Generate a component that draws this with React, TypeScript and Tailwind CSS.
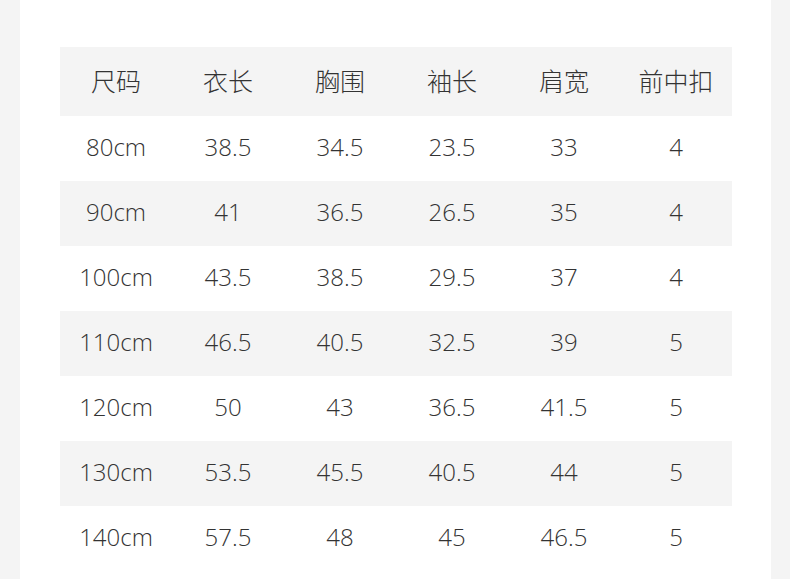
const headers = ["尺码", "衣长", "胸围", "袖长", "肩宽", "前中扣"];

const rows = [
  ["80cm", "38.5", "34.5", "23.5", "33", "4"],
  ["90cm", "41", "36.5", "26.5", "35", "4"],
  ["100cm", "43.5", "38.5", "29.5", "37", "4"],
  ["110cm", "46.5", "40.5", "32.5", "39", "5"],
  ["120cm", "50", "43", "36.5", "41.5", "5"],
  ["130cm", "53.5", "45.5", "40.5", "44", "5"],
  ["140cm", "57.5", "48", "45", "46.5", "5"],
];

export default function App() {
  return (
    <div className="flex h-[579px] w-[790px] overflow-hidden bg-[#f4f4f4] pl-[20px] pr-[19px]">
      <div className="flex-1 bg-white pt-[47px] pl-[40px] pr-[39px]">
        <div className="w-[672px] text-[#333333]">
          {/* header */}
          <div className="grid h-[69px] grid-cols-6 items-center bg-[#f4f4f4] pb-[3px] font-['Noto_Sans_CJK_SC',sans-serif] text-[25px] font-light">
            {headers.map((h) => (
              <div key={h} className="text-center leading-none">
                {h}
              </div>
            ))}
          </div>
          {/* rows */}
          {rows.map((r, i) => (
            <div
              key={r[0]}
              className={`grid h-[65px] grid-cols-6 items-center pb-[3px] font-['Open_Sans',sans-serif] text-[24px] font-light ${
                i % 2 === 1 ? "bg-[#f4f4f4]" : "bg-white"
              }`}
            >
              {r.map((c, j) => (
                <div key={j} className="text-center leading-none">
                  {c}
                </div>
              ))}
            </div>
          ))}
        </div>
      </div>
    </div>
  );
}
